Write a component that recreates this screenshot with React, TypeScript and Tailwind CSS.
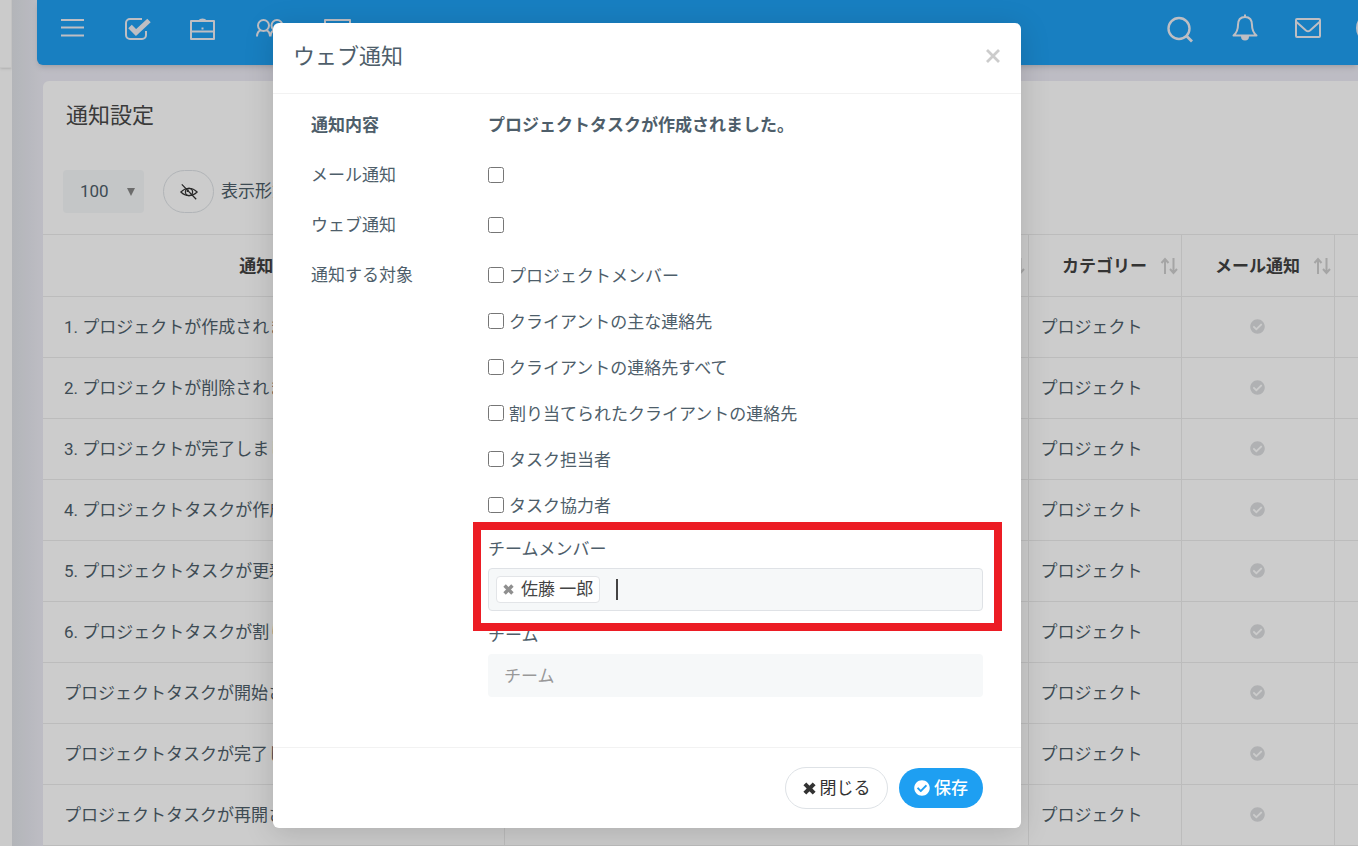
import React, { useState } from 'react';
import { FaCheckCircle } from 'react-icons/fa';

interface NotificationRow {
  title: string;
  category: string;
}

const rows: NotificationRow[] = [
  { title: '1. プロジェクトが作成されました。', category: 'プロジェクト' },
  { title: '2. プロジェクトが削除されました。', category: 'プロジェクト' },
  { title: '3. プロジェクトが完了しました。', category: 'プロジェクト' },
  { title: '4. プロジェクトタスクが作成されました。', category: 'プロジェクト' },
  { title: '5. プロジェクトタスクが更新されました。', category: 'プロジェクト' },
  { title: '6. プロジェクトタスクが割り当てられました。', category: 'プロジェクト' },
  { title: 'プロジェクトタスクが開始されました。', category: 'プロジェクト' },
  { title: 'プロジェクトタスクが完了しました。', category: 'プロジェクト' },
  { title: 'プロジェクトタスクが再開されました。', category: 'プロジェクト' },
];

const targets = [
  'プロジェクトメンバー',
  'クライアントの主な連絡先',
  'クライアントの連絡先すべて',
  '割り当てられたクライアントの連絡先',
  'タスク担当者',
  'タスク協力者',
];

function NavIcon({ label, children }: { label: string; children: React.ReactNode }) {
  return (
    <button aria-label={label} className="flex h-14 w-full items-center justify-center">
      <svg
        className="h-8 w-8"
        viewBox="0 0 32 32"
        fill="none"
        stroke="currentColor"
        strokeWidth={2}
        strokeLinejoin="round"
      >
        {children}
      </svg>
    </button>
  );
}

function TimesIcon({ className }: { className: string }) {
  return (
    <svg className={className} viewBox="0 0 14 14" fill="none" stroke="currentColor" strokeWidth={4.4}>
      <path d="M2 2l10 10M12 2L2 12" />
    </svg>
  );
}

function SortIcon() {
  return (
    <svg
      className="absolute top-1/2 right-0.5 h-5 w-5 -translate-y-1/2 text-[#cfcfcf]"
      viewBox="0 0 20 20"
      fill="none"
      stroke="currentColor"
      strokeWidth={2}
    >
      <path d="M6 18V3M2.500 7L6 3l3.500 4M14.500 2v15M11 13l3.500 4L18 13" />
    </svg>
  );
}

function TopBar() {
  return (
    <header className="ml-[25px] flex h-[65px] items-start rounded-bl-md bg-[#1e9ff2] text-[#eeeef4] shadow-md">
      <nav className="ml-0.5 grid grid-cols-[repeat(5,66px)]">
        <NavIcon label="メニュー">
          <path d="M5 8h23M5 15.500h23M5 23.500h23" />
        </NavIcon>
        <NavIcon label="タスク">
          <path d="M20 7H8a4 4 0 0 0-4 4v12a4 4 0 0 0 4 4h12a4 4 0 0 0 4-4v-4" />
          <path d="M8 14.500l6 6L27 8.500" strokeWidth={5} strokeLinejoin="miter" />
        </NavIcon>
        <NavIcon label="プロジェクト">
          <path d="M3 9h23v18H3zM3 19.500h23M11 9a4 3 0 0 1 7 0" />
          <path d="M14.500 15.500v2" />
        </NavIcon>
        <NavIcon label="メンバー">
          <circle cx="9.500" cy="13.500" r="5.500" />
          <circle cx="23" cy="13.500" r="5.500" />
          <path d="M3 24.500c0-3.500 1.500-5.500 4-6.500M12 18c2.500 1 4 3 4 6.500M16.500 24.500c0-3.500 1.500-5.500 4-6.500M26 18c2.500 1 4 3 4 6.500" />
        </NavIcon>
        <NavIcon label="モニター">
          <path d="M5 8h25v16H5zM12 29h11" />
        </NavIcon>
      </nav>
      <div className="-mr-[46px] ml-auto grid grid-cols-[repeat(4,64px)]">
        <NavIcon label="検索">
          <circle cx="15" cy="16.500" r="10.500" strokeWidth={2.4} />
          <path d="M22.500 24l5.500 5.500" strokeWidth={2.8} />
        </NavIcon>
        <NavIcon label="通知">
          <path d="M17 5c-5 0-7 3.500-7 8 0 5-1 7.500-4.500 10.500h23C25 20.500 24 18 24 13c0-4.500-2-8-7-8zM17 2.500V5" />
          <path d="M14 24.500a3 3 0 0 0 6 0z" fill="currentColor" />
        </NavIcon>
        <NavIcon label="メール">
          <rect x="4" y="7" width="24" height="18" rx="1" />
          <path d="M4.500 10l9.500 8.500c1.300 1 2.700 1 4 0l9.500-8.500" />
        </NavIcon>
        <NavIcon label="アカウント">
          <circle cx="16" cy="16" r="15" />
        </NavIcon>
      </div>
    </header>
  );
}

function SettingsCard() {
  return (
    <main className="mt-4 ml-[31px] overflow-hidden rounded-tl-md bg-white">
      <h1 className="px-[23px] pt-[19px] text-[22px] leading-8 text-[#494949]">通知設定</h1>
      <div className="mt-[38px] mb-[21px] flex h-[43px] items-center pl-5">
        <div className="relative">
          <select
            aria-label="表示件数"
            className="h-[43px] w-[81px] appearance-none rounded-sm bg-[#f6f8f9] pl-[17px] text-[17px] text-[#4e5e6a]"
          >
            <option>100</option>
          </select>
          <svg className="pointer-events-none absolute top-[18px] right-[9px] h-2 w-2" viewBox="0 0 8 8">
            <path d="M0 0h8L4 8z" fill="#888" />
          </svg>
        </div>
        <button
          aria-label="列の表示"
          className="ml-[19px] flex h-[43px] w-[51px] items-center justify-center rounded-full border border-[#dee2e6] text-[#333]"
        >
          <svg className="h-[18px] w-[18px]" viewBox="0 0 20 20" fill="none" stroke="currentColor" strokeWidth={1.4}>
            <path d="M1 10C4 7 7 6 10 6s6 1 9 4c-3 3-6 4-9 4s-6-1-9-4z" />
            <circle cx="10" cy="10" r="4" />
            <path d="M10 8a2 2 0 0 0-2 2M2 1.500l16 16.500" />
          </svg>
        </button>
        <span className="ml-[7px] text-[17px] whitespace-nowrap text-[#4e5e6a]">表示形式</span>
      </div>
      <table className="w-[1444px] table-fixed border-collapse text-[17px] text-[#4e5e6a]">
        <colgroup>
          <col className="w-[461px]" />
          <col className="w-[524px]" />
          <col className="w-[153px]" />
          <col className="w-[153px]" />
          <col className="w-[153px]" />
        </colgroup>
        <thead>
          <tr className="h-[62px] text-[#424242]">
            {['通知内容', '通知する対象', 'カテゴリー', 'メール通知'].map((head) => (
              <th key={head} className="relative border-y border-r border-[#ececec] pt-0.5 font-bold">
                {head}
                <SortIcon />
              </th>
            ))}
            <td className="border-y border-r border-[#ececec]"></td>
          </tr>
        </thead>
        <tbody>
          {rows.map((row) => (
            <tr key={row.title} className="h-[61px]">
              <td className="border-r border-b border-[#ececec] pt-0.5 pl-[21px] whitespace-nowrap">{row.title}</td>
              <td className="border-r border-b border-[#ececec]"></td>
              <td className="border-r border-b border-[#ececec] pt-0.5 pl-3">{row.category}</td>
              <td className="border-r border-b border-[#ececec] pb-0.5">
                <FaCheckCircle className="mx-auto h-[15px] w-[15px] text-[#dcdee0]" />
              </td>
              <td className="border-r border-b border-[#ececec]"></td>
            </tr>
          ))}
        </tbody>
      </table>
    </main>
  );
}

function CheckRow({ id, label }: { id: string; label: string }) {
  return (
    <>
      <label htmlFor={id} className="flex h-[50px] items-center pt-0.5">
        {label}
      </label>
      <div className="flex h-[50px] items-center">
        <input id={id} type="checkbox" className="h-4 w-4" />
      </div>
    </>
  );
}

function NotificationModal({ onClose }: { onClose: () => void }) {
  const [members, setMembers] = useState(['佐藤 一郎']);

  return (
    <div
      role="dialog"
      aria-label="ウェブ通知"
      className="w-[748px] max-w-full rounded-md bg-white text-[17px] text-[#4e5e6a] shadow-[0_5px_30px_rgba(0,0,0,0.15)]"
    >
      {/* Header */}
      <div className="flex h-[71px] items-center justify-between border-b border-[#f2f2f2] px-5 pb-1">
        <h2 className="text-[22px]">ウェブ通知</h2>
        <button aria-label="閉じる" onClick={onClose} className="text-[#ccc]">
          <svg className="h-4 w-4" viewBox="0 0 16 16" fill="none" stroke="currentColor" strokeWidth={2.8}>
            <path d="M2 2l12 12M14 2L2 14" />
          </svg>
        </button>
      </div>

      {/* Body */}
      <div className="grid grid-cols-[177px_1fr] px-[38px] pt-1.5 pb-[50px]">
        <div className="flex h-[50px] items-center pt-0.5 font-bold">通知内容</div>
        <div className="flex h-[50px] items-center pt-0.5 font-bold">プロジェクトタスクが作成されました。</div>
        <CheckRow id="email" label="メール通知" />
        <CheckRow id="web" label="ウェブ通知" />
        <div className="flex h-[50px] items-center pt-0.5">通知する対象</div>
        <div className="pt-0.5">
          {targets.map((target) => (
            <label key={target} className="flex h-[46px] items-center gap-[5px]">
              <input type="checkbox" className="h-4 w-4" />
              <span className="pt-1">{target}</span>
            </label>
          ))}
          <div className="relative">
            <label htmlFor="members" className="flex h-10 items-center pt-1">
              チームメンバー
            </label>
            <div className="flex h-[43px] items-center rounded-sm border border-[#dfe2e6] bg-[#f6f8f9] px-[7px]">
              {members.map((member) => (
                <span
                  key={member}
                  className="flex h-[27px] items-center gap-[7px] rounded border border-[#e3e5e8] bg-white px-1.5 text-[#444]"
                >
                  <button aria-label={`${member}を削除`} onClick={() => setMembers([])}>
                    <TimesIcon className="h-[11px] w-[11px] text-[#8f8f8f]" />
                  </button>
                  {member}
                </span>
              ))}
              <span className="ml-4 h-[21px] w-0.5 bg-[#444]"></span>
              <input id="members" className="min-w-0 flex-1 bg-transparent outline-none" />
            </div>
            {/* Highlight around the team member field */}
            <div className="pointer-events-none absolute -top-1.5 -right-[19px] -bottom-5 -left-[15px] border-8 border-[#ec1c24]"></div>
          </div>
          <label htmlFor="team" className="flex h-[43px] items-center pt-1.5">
            チーム
          </label>
          <input
            id="team"
            placeholder="チーム"
            className="h-[43px] w-full rounded-sm bg-[#f6f8f9] px-4 outline-none placeholder:text-[#999]"
          />
        </div>
      </div>

      {/* Footer */}
      <div className="flex h-[81px] items-center justify-end gap-[11px] border-t border-[#f2f2f2] px-[38px]">
        <button
          onClick={onClose}
          className="flex h-[42px] w-[103px] items-center justify-center gap-1 rounded-full border border-[#dee2e6] bg-white text-[#333]"
        >
          <TimesIcon className="h-[13px] w-[13px]" />
          <span className="pt-0.5">閉じる</span>
        </button>
        <button className="flex h-10 w-[84px] items-center justify-center gap-1 rounded-full bg-[#1e9ff2] font-medium text-white">
          <FaCheckCircle className="h-4 w-4" />
          <span className="pt-0.5">保存</span>
        </button>
      </div>
    </div>
  );
}

export default function App() {
  const [isOpen, setIsOpen] = useState(true);

  return (
    <div
      lang="ja"
      className="relative flex h-screen overflow-hidden bg-[#edecf5] font-['Roboto','Noto_Sans_CJK_JP',sans-serif]"
    >
      <aside className="w-3 shrink-0 bg-[#fefefe]">
        <div className="h-[68px] border-r border-b border-[#f4f4f4] shadow-sm"></div>
      </aside>
      <div className="min-w-0 flex-1 bg-linear-to-r from-[#e0e3e8] to-[#edecf5] to-[31px]">
        <TopBar />
        <SettingsCard />
      </div>
      {isOpen && (
        <div className="absolute inset-0 flex items-start justify-center bg-black/20 pt-[23px] pr-16">
          <NotificationModal onClose={() => setIsOpen(false)} />
        </div>
      )}
    </div>
  );
}
